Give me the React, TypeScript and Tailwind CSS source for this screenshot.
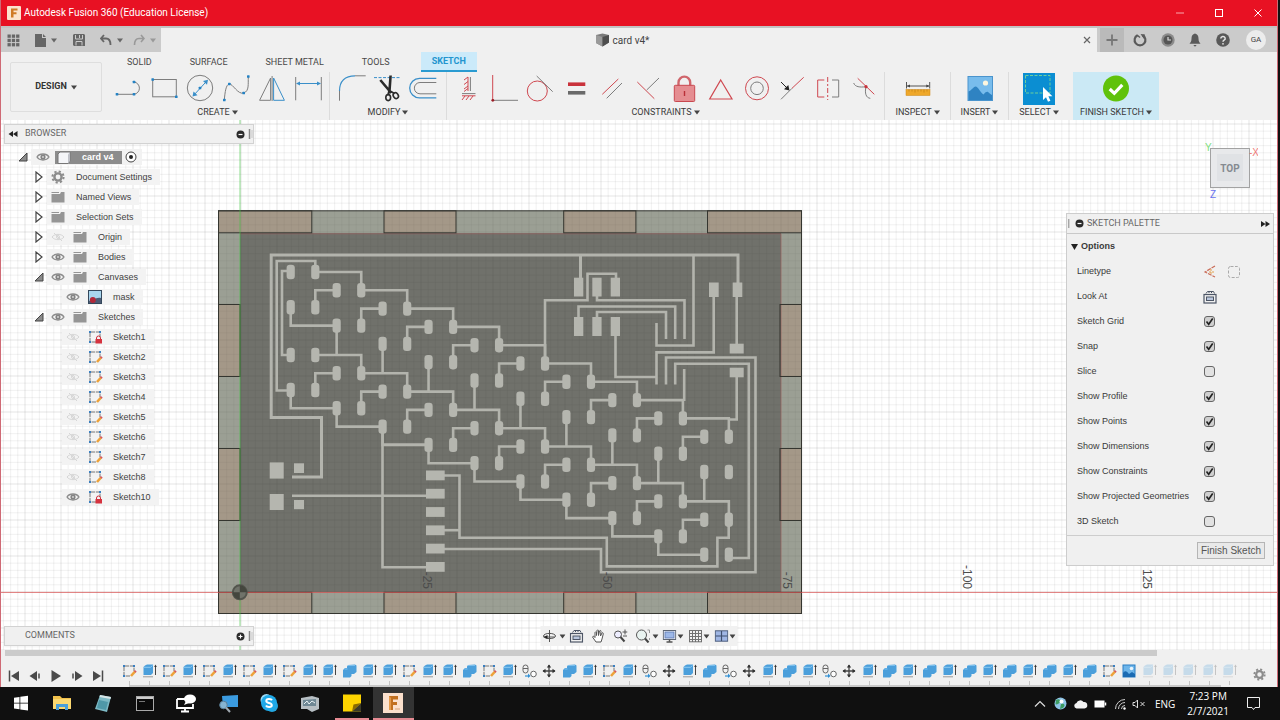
import React, { useState } from "react";

const BLUE = "#3a8fc9";
const RED = "#cf4850";
const GRAY = "#7d7d7d";

type IconProps = { w?: number; h?: number; box?: string; className?: string; children: React.ReactNode };

function Icon({ w = 30, h = 30, box, className = "", children }: IconProps) {
  return (
    <svg width={w} height={h} viewBox={box ?? `0 0 ${w} ${h}`} fill="none" className={`shrink-0 ${className}`} aria-hidden="true">
      {children}
    </svg>
  );
}

function Caret({ className = "text-[#444]" }: { className?: string }) {
  return (
    <Icon w={6} h={5} className={className}>
      <path d="M0 0.5H6L3 4.5Z" fill="currentColor" />
    </Icon>
  );
}

function Dots({ at }: { at: number[][] }) {
  return (
    <>
      {at.map(([x, y]) => (
        <rect key={`${x}-${y}`} x={x - 1.3} y={y - 1.3} width="2.6" height="2.6" rx="0.6" fill="#2482c4" />
      ))}
    </>
  );
}

/* ---------- Ribbon icons ---------- */

const createIcons: [string, React.ReactNode][] = [
  ["Line", <><path d="M4 20.3H21" stroke={GRAY} /><path d="M21 20.3A6.2 6.2 0 0 0 21 8" stroke={GRAY} /><Dots at={[[4, 20.3], [21, 20.3], [21, 8]]} /></>],
  ["Rectangle", <><rect x="3.7" y="5.5" width="23.6" height="17.3" stroke={GRAY} /><Dots at={[[3.7, 5.5], [27.3, 22.8]]} /></>],
  ["Circle", <><circle cx="15" cy="14" r="12.7" stroke={GRAY} /><path d="M8.5 21.5L22 6.8" stroke={BLUE} /><path d="M7.5 22.5l1-5 4 3.8zM23 5.8l-1 5-4-3.8z" fill={BLUE} /><Dots at={[[15, 14]]} /></>],
  ["Spline", <><path d="M3.3 26C4 18 5 10.5 8.3 10S17 21 22.7 19S27 10 27.3 3" stroke={GRAY} /><Dots at={[[3.3, 26], [8.3, 10], [22.7, 19], [27.3, 2.5]]} /></>],
  ["Mirror", <><path d="M13.6 4V26.3H2.6Z" stroke={GRAY} /><path d="M16.6 4V26.3H27.4Z" stroke={BLUE} /><path d="M15.1 2V27" stroke={GRAY} /></>],
  ["Dimension", <><path d="M2.7 3V26.3M28.3 3V26.3" stroke={GRAY} /><path d="M4 9.5H27" stroke={BLUE} /><path d="M3 9.5l4-2v4zM28 9.5l-4-2v4z" fill={BLUE} /></>],
];

const modifyIcons: [string, React.ReactNode][] = [
  ["Fillet", <><path d="M2.5 17C2.5 7 8 1.8 18 1.8" stroke={BLUE} strokeWidth="1.2" /><path d="M2.5 17V26.7M18 1.8H28.7" stroke={GRAY} /></>],
  ["Trim", <><path d="M1 3.6H28" stroke={BLUE} strokeDasharray="3 1.5" /><path d="M7.3 6l11 13M17.6 1.5l-1.3 18" stroke="#2b2b2b" strokeWidth="2.6" /><path d="M16 17l-1 4M17 17l4.5 2.5" stroke="#2b2b2b" strokeWidth="1.8" /><ellipse cx="15.2" cy="23.6" rx="2.4" ry="3" stroke="#2b2b2b" strokeWidth="1.6" /><ellipse cx="22.8" cy="21.6" rx="2.4" ry="3" transform="rotate(-35 22.8 21.6)" stroke="#2b2b2b" strokeWidth="1.6" /></>],
  ["Offset", <><path d="M27.3 4.3H10.5a9.8 9.8 0 0 0 0 19.6H27.3" stroke={BLUE} strokeWidth="1.3" /><path d="M27.3 8.5H11a5.6 5.6 0 0 0 0 11.3H27.3" stroke={GRAY} /></>],
];

const constraintIcons: [string, React.ReactNode][] = [
  ["Horizontal/Vertical", <><path d="M15 3V17M9 21.8H22.5M11 6l4-3M11 10.5l4-3M11 15l4-3M11 17.5l4-3M9 26l3-4M13 26l3-4M17 26l3-4" stroke={RED} /><path d="M17.4 3V17M9 19.6H22.5" stroke={GRAY} /></>],
  ["Coincident", <><path d="M3.7 1V26.3" stroke={RED} /><path d="M3.7 26.3H29" stroke={GRAY} /><circle cx="3.8" cy="26.3" r="1.4" fill="#9b1c25" /></>],
  ["Tangent", <><circle cx="12.3" cy="17" r="10" stroke={RED} /><path d="M11.7 2L27.7 17.7" stroke={GRAY} /></>],
  ["Equal", <><path d="M7 10.2H24.3" stroke="#c9323b" strokeWidth="3.6" /><path d="M7 18.8H24.3" stroke="#6a6a6a" strokeWidth="3.6" /></>],
  ["Parallel", <><path d="M5.3 20.3L21.3 5" stroke={RED} /><path d="M9.7 24.3L25 9" stroke={GRAY} /></>],
  ["Perpendicular", <><path d="M4.3 8L21.3 24.7" stroke={RED} /><path d="M13.7 16L26 4" stroke={GRAY} /></>],
  ["Fix", <><path d="M9.5 12V8.5a5.8 5.8 0 0 1 11.7 0V12" stroke="#d0666c" strokeWidth="2.4" /><rect x="5.3" y="11.3" width="20.4" height="16.2" rx="1" fill="#e58d91" stroke="#c8484f" /><path d="M15.5 17v5" stroke="#b92f38" strokeWidth="1.4" /></>],
  ["Midpoint", <path d="M15.7 6L27 25H4.7Z" stroke={RED} strokeWidth="1.2" />],
  ["Concentric", <><circle cx="16" cy="14.3" r="11.5" stroke={RED} /><circle cx="16" cy="14.3" r="6.3" stroke={GRAY} /></>],
  ["Collinear", <><path d="M4 25.3L15 14.3" stroke={GRAY} /><path d="M15 14.3L26.7 3.3" stroke={RED} /><path d="M4 8L10 14" stroke="#222" /><path d="M12.5 16.5l-1.2-5.5-4.3 4.3z" fill="#222" /></>],
  ["Symmetry", <><path d="M11.3 6H4.7V23H11.3" stroke={RED} /><path d="M14.7 3V26" stroke={RED} strokeDasharray="5 2 2 2" /><path d="M19 6H25.7V23H19" stroke={GRAY} /></>],
  ["Curvature", <><path d="M4.7 9C6 13 11 13.5 17 12.7M17 12.7C15.5 19 17 24 21.3 24.3" stroke={GRAY} /><path d="M8.7 4.3L25.3 20.3" stroke={RED} /><circle cx="17" cy="12.7" r="1.6" fill="#c9323b" /></>],
];

function Group({ label, icons, className }: { label: string; icons: [string, React.ReactNode][]; className: string }) {
  return (
    <div className={`flex shrink-0 flex-col items-center border-r border-[#dcdcdc] ${className}`}>
      <div className="flex h-[33px] items-center">
        {icons.map(([name, art]) => (
          <button key={name} type="button" aria-label={name} className="flex w-9 justify-center">
            <Icon>{art}</Icon>
          </button>
        ))}
      </div>
      <GroupLabel label={label} />
    </div>
  );
}

function GroupLabel({ label }: { label: string }) {
  return (
    <button type="button" className="flex h-[15px] items-center gap-[2px] text-[9px] leading-[15px] whitespace-nowrap text-[#3a3a3a]">
      {label}
      <Caret />
    </button>
  );
}

function Ribbon() {
  return (
    <div className="flex h-[68px] shrink-0 bg-[#f0f0f0] font-['Roboto',sans-serif]">
      <button
        type="button"
        className="mt-[10px] ml-[9px] flex h-[50px] w-[92px] shrink-0 items-center justify-center gap-1 rounded-xs border border-[#dedede] text-[9px] font-bold text-[#333]"
      >
        DESIGN
        <Caret />
      </button>
      <div className="ml-1 flex flex-1 flex-col">
        <nav className="flex h-5 items-stretch pl-[2px] text-[9px] leading-5 text-[#484848]">
          {["SOLID", "SURFACE", "SHEET METAL", "TOOLS"].map((t) => (
            <a key={t} href="#" className="px-[19px]">
              {t}
            </a>
          ))}
          <a href="#" className="ml-3 border-b-2 border-[#2a9bd1] bg-[#cbeafa] px-[11px] leading-[19px] font-bold text-[#2395cf]">
            SKETCH
          </a>
        </nav>
        <div className="flex h-12 items-stretch">
          <Group label="CREATE" icons={createIcons} className="w-[224px]" />
          <Group label="MODIFY" icons={modifyIcons} className="w-[117px]" />
          <Group label="CONSTRAINTS" icons={constraintIcons} className="w-[438px]" />
          <div className="flex w-[66px] shrink-0 flex-col items-center border-r border-[#dcdcdc]">
            <div className="flex h-[33px] items-center">
              <Icon>
                <rect x="3" y="15.5" width="24" height="6" fill="#efa82a" stroke="#c98514" strokeWidth="0.5" />
                <path d="M6 15.5v2M9 15.5v2M12 15.5v3M15 15.5v2M18 15.5v2M21 15.5v3M24 15.5v2" stroke="#b5760e" strokeWidth="0.6" />
                <path d="M3.5 8V14.5M26.7 8V14.5M4 12H26" stroke="#555" />
                <path d="M4 12l3-1.6v3.2zM26.3 12l-3-1.6v3.2z" fill="#444" />
              </Icon>
            </div>
            <GroupLabel label="INSPECT" />
          </div>
          <div className="flex w-[58px] shrink-0 flex-col items-center border-r border-[#dcdcdc]">
            <div className="flex h-[33px] items-center">
              <Icon>
                <rect x="3" y="2.5" width="24.5" height="24" fill="#78bcec" stroke="#4a94cd" />
                <circle cx="20.5" cy="9" r="2.6" fill="#fdf6df" />
                <path d="M3.5 17.5C7 16 9 12 11 12.5S16 19 18.5 20.5C20.5 18 22 17.5 23 18S26 21 27 21V26H3.5Z" fill="#2f83c2" />
              </Icon>
            </div>
            <GroupLabel label="INSERT" />
          </div>
          <div className="mr-1 flex w-[60px] shrink-0 flex-col items-center">
            <div className="flex h-[33px] items-center">
              <Icon w={32} h={32}>
                <rect width="32" height="32" fill="#0b8ed2" />
                <path d="M2.5 2.5H27V20H2.5Z" stroke="#6ccf9b" strokeDasharray="3 1.5" />
                <path d="M20 14V27l3-2.8 2 4.6 2.4-1-2-4.5h4z" fill="#fff" />
              </Icon>
            </div>
            <GroupLabel label="SELECT" />
          </div>
          <div className="flex w-[86px] shrink-0 flex-col items-center bg-[#cbe9f5]">
            <div className="flex h-[33px] items-center">
              <Icon>
                <circle cx="15" cy="14.5" r="13" fill="#60c20b" />
                <path d="M8.7 15l4.6 4.3 8-8.5" stroke="#fff" strokeWidth="3.2" />
              </Icon>
            </div>
            <GroupLabel label="FINISH SKETCH" />
          </div>
        </div>
      </div>
    </div>
  );
}

/* ---------- Title and tab bars ---------- */

function TitleBar() {
  return (
    <header className="flex h-[26px] shrink-0 items-center bg-[#e81123] pl-[6px] text-white">
      <Icon w={14} h={14}>
        <rect width="14" height="14" rx="1" fill="#fbe3cd" />
        <path d="M4 2.5H10.5V4.5H6.5V6.3H9.5V8.2H6.5V11.5H4Z" fill="#cf7a26" />
      </Icon>
      <h1 className="ml-[3px] flex-1 font-['Roboto',sans-serif] text-[10px] leading-4">Autodesk Fusion 360 (Education License)</h1>
      <button type="button" aria-label="Minimize" className="flex w-[39px] justify-center">
        <Icon w={10} h={10}><path d="M1 5H9" stroke="#f9a9af" /></Icon>
      </button>
      <button type="button" aria-label="Maximize" className="flex w-[39px] justify-center">
        <Icon w={10} h={10}><rect x="1.5" y="1.5" width="7" height="7" stroke="#fff" /></Icon>
      </button>
      <button type="button" aria-label="Close" className="flex w-[39px] justify-center">
        <Icon w={10} h={10}><path d="M1.5 1.5L8.5 8.5M8.5 1.5L1.5 8.5" stroke="#fff" /></Icon>
      </button>
    </header>
  );
}

function TabBar() {
  return (
    <div className="flex h-[26px] shrink-0 border-t-2 border-[#c3c3c3] bg-[#f0f0f0] text-[#666]">
      <div className="flex w-[160px] items-center bg-[#cbcbcb]">
        <button type="button" aria-label="Data panel" className="ml-[6px]">
          <Icon w={13} h={13}>
            {[0, 1, 2].map((r) => [0, 1, 2].map((c) => <rect key={`${r}${c}`} x={0.5 + c * 4.3} y={0.5 + r * 4.3} width="3.3" height="3.3" fill="#666" />))}
          </Icon>
        </button>
        <button type="button" aria-label="File" className="ml-[15px] flex items-center gap-[5px]">
          <Icon w={11} h={13}><path d="M0 0H7V4H11V13H0ZM8 0L11 3H8Z" fill="#666" /></Icon>
          <Caret className="text-[#666]" />
        </button>
        <button type="button" aria-label="Save" className="ml-[16px]">
          <Icon w={12} h={12}>
            <path d="M1 0H11L12 1V12H1L0 11V1Z" fill="#666" />
            <path d="M2.5 1V5H9.5V1M3 11.5V7.5H9V11.5" stroke="#cbcbcb" />
            <path d="M6.5 1v3" stroke="#cbcbcb" />
          </Icon>
        </button>
        <button type="button" aria-label="Undo" className="ml-[15px] flex items-center gap-[5px]">
          <Icon w={12} h={12}><path d="M4 1L1 4.5L4 8M1.5 4.5H6C9 4.5 10.5 7 10.5 11" stroke="#666" strokeWidth="1.8" /></Icon>
          <Caret className="text-[#666]" />
        </button>
        <button type="button" aria-label="Redo" className="ml-[10px] flex items-center gap-[5px]">
          <Icon w={12} h={12}><path d="M8 1L11 4.5L8 8M10.5 4.5H6C3 4.5 1.5 7 1.5 11" stroke="#999" strokeWidth="1.6" /></Icon>
          <Caret className="text-[#999]" />
        </button>
      </div>
      <div className="flex flex-1 items-center">
        <div className="flex flex-1 items-center justify-center gap-[3px] text-[10px] text-[#444] font-['Roboto',sans-serif]">
          <Icon w={15} h={14}>
            <path d="M7.5 0.5L14 2V9.5L7.5 13.5L1 10V2Z" fill="#7b7b7b" />
            <path d="M7.5 4V13.5L1 10V2Z" fill="#9a9a9a" />
            <path d="M7.5 4L14 2V9.5L7.5 13.5Z" fill="#4e4e4e" />
          </Icon>
          card v4*
        </div>
        <button type="button" aria-label="Close tab" className="mr-[6px]">
          <Icon w={8} h={8}><path d="M1 1L7 7M7 1L1 7" stroke="#666" strokeWidth="1.2" /></Icon>
        </button>
      </div>
      <div className="flex w-[180px] items-center bg-[#cbcbcb]">
        <button type="button" aria-label="New tab" className="ml-[3px] flex h-6 w-6 items-center justify-center bg-[#bababa]">
          <Icon w={12} h={12}><path d="M6 0.5V11.5M0.5 6H11.5" stroke="#777" strokeWidth="1.8" /></Icon>
        </button>
        <button type="button" aria-label="Extensions" className="ml-[9px]">
          <Icon w={14} h={14}><path d="M9.5 2.2A5.4 5.4 0 1 1 4.500 2.2" stroke="#5a5a5a" strokeWidth="2.200" /><path d="M7.500 1L12 1.500L11 6Z" fill="#5a5a5a" /><path d="M4 2L7 4.500" stroke="#5a5a5a" strokeWidth="1.500" /></Icon>
        </button>
        <button type="button" aria-label="Job status" className="ml-[14px]">
          <Icon w={14} h={14}><circle cx="7" cy="7" r="6.7" fill="#8b8b8b" /><circle cx="7" cy="7" r="4.5" fill="#555" /><path d="M7 4v3h3" stroke="#ddd" strokeWidth="1.2" /></Icon>
        </button>
        <button type="button" aria-label="Notifications" className="ml-[13px]">
          <Icon w={14} h={14}><path d="M7 0.5C9.5 1 10.5 3 10.5 5.5C10.5 8.5 11.5 9.5 12.5 10.8H1.5C2.5 9.5 3.5 8.5 3.5 5.5C3.5 3 4.5 1 7 0.5Z" fill="#595959" /><path d="M5.3 12H8.7L7 13.8Z" fill="#595959" /></Icon>
        </button>
        <button type="button" aria-label="Help" className="ml-[14px]">
          <Icon w={14} h={14}><circle cx="7" cy="7" r="6.8" fill="#595959" /><path d="M4.8 5.5a2.2 2 0 1 1 3.3 1.7C7.3 7.7 7 8 7 8.8" stroke="#e4e4e4" strokeWidth="1.5" /><circle cx="7" cy="10.8" r="0.9" fill="#e4e4e4" /></Icon>
        </button>
        <button type="button" className="ml-[16px] h-5 w-5 rounded-full bg-[#ececec] text-[8px] leading-5 text-[#444] font-['Roboto',sans-serif]">
          GA
        </button>
      </div>
    </div>
  );
}

/* ---------- Canvas drawing ---------- */

const STEP_X = 45.95;
const STEP_Y = 18.3;
const ax = (i: number) => 290.7 + STEP_X * i;
const bx = (i: number) => 315.3 + STEP_X * i;
const rowY = (r: number, i: number) => [272, 307.3, 355, 390][r] + STEP_Y * i;
const cols = Array.from({ length: 10 }, (_, i) => i);

const gridTraces = cols.flatMap((i) => {
  const out: string[] = [];
  if (i < 9) {
    out.push(`M${ax(i)} ${rowY(3, i)}V${rowY(3, i + 1)}H${ax(i + 1)}`);
    out.push(`M${bx(i)} ${rowY(2, i)}H${bx(i + 1)}V${rowY(2, i + 1)}`);
    out.push(`M${bx(i)} ${rowY(0, i)}H${bx(i + 1)}V${rowY(0, i + 1)}`);
  }
  if (i > 0) {
    out.push(`M${ax(i)} ${rowY(0, i)}H${bx(i - 1)}V${rowY(1, i - 1)}`);
    out.push(`M${ax(i)} ${rowY(2, i)}H${bx(i - 1)}V${rowY(3, i - 1)}`);
    out.push(`M${ax(i)} ${rowY(1, i)}V${rowY(2, i - 1)}`);
  }
  return out;
});

const traces = [
  "M290.7 307V325.6H336.7",
  "M315.3 272V261H276.7V390.5H290.7",
  "M290.7 271H282V355H290.7",
  "M545 364V300.3H587.5V273.7H616V280",
  "M597 294V300.3H684.5V339",
  "M578.5 320V306.5H675.2V339",
  "M597 320V312H666V339",
  "M615.5 334V377H656.5",
  "M656.5 384.5V352.4H713.7V295",
  "M656.5 323V345.5H693.5V255",
  "M666 384.5V357.5H755.5V572.3H601V549H443",
  "M675.2 384.5V363.7H748.8V558H729",
  "M684.2 369V401",
  "M736.7 295V345M736.7 375V419.5H729",
  "M728.7 520V537.7H717.4V566.4H606.8V537.7H459.5V475.5H443",
  "M443 530.2H459.5",
  "M382.5 426V567.2H428M382.5 444.8H428",
  "M292 495.7H428",
];

const wideTraces = ["M292 477H321.5V417.5H271.2V255H738V285", "M580.5 255V280"];

const rectPads: number[][] = [
  ...[574, 592.3, 610.7].flatMap((x) => [[x, 277.7, 9.3, 18.8], [x, 317, 9.3, 19]]),
  [709, 282.5, 9.7, 14.5], [732.7, 282.5, 9.6, 14.5],
  [729.7, 343.7, 14, 9.8], [729.7, 367.7, 14, 9.6],
  ...[0, 1, 2, 3, 4, 5].map((i) => [426, 470.5 + 18.3 * i, 18.7, 9.8]),
  [269.7, 462.4, 14, 16.2], [269.7, 494, 14, 16],
  [294, 463.3, 10, 9.7], [294, 500, 10, 9.2],
];

const tan: number[][] = [
  [218.5, 210.8, 93.3, 22], [384, 210.8, 72, 22], [563.7, 210.8, 72.2, 22], [707.5, 210.8, 94, 22],
  [218.5, 592.3, 93.3, 21.2], [384, 592.3, 72, 21.2], [563.7, 592.3, 72.2, 21.2], [707.5, 592.3, 94, 21.2],
  [218.5, 304.5, 21.5, 72], [218.5, 448.5, 21.5, 72], [780, 304.5, 21.5, 72], [780, 448.5, 21.5, 72],
];

const axisLabels: [string, number][] = [["-25", 427], ["-50", 607], ["-75", 787], ["-100", 967], ["125", 1147]];

function Board() {
  return (
    <svg className="absolute inset-0 h-full w-full" role="img" aria-label="Sketch canvas">
      <defs>
        <pattern id="grid" width="36" height="36" patternUnits="userSpaceOnUse" patternTransform="translate(24 4)">
          <path d="M7.2 0V36M14.4 0V36M21.6 0V36M28.8 0V36M0 7.2H36M0 14.4H36M0 21.6H36M0 28.8H36" stroke="#000" strokeOpacity="0.05" />
          <path d="M0 0V36M0 0H36M36 0V36M0 36H36" stroke="#000" strokeOpacity="0.1" />
        </pattern>
      </defs>
      <rect width="100%" height="100%" fill="#fff" />
      <rect width="100%" height="100%" fill="url(#grid)" />
      <g transform="translate(-1 -120)">
        <rect x="218.5" y="210.8" width="583" height="402.7" fill="#9b9f94" />
        {tan.map(([x, y, w, h]) => <rect key={`${x}-${y}`} x={x} y={y} width={w} height={h} fill="#a49888" />)}
        <rect x="240" y="233" width="541" height="359" fill="#70716b" />
      </g>
      <svg x="217" y="90" width="584" height="404" viewBox="217 90 584 404" opacity="0.6">
        <rect x="217" y="90" width="584" height="404" fill="url(#grid)" />
      </svg>
      <g transform="translate(-1 -120)">
        <path d="M240 233.8H781V592" stroke="#a3625f" strokeOpacity="0.6" fill="none" />
        <g stroke="#34352f" fill="none">
          <rect x="218.5" y="210.8" width="583" height="402.7" />
          {tan.map(([x, y, w, h]) => <rect key={`${x}-${y}`} x={x} y={y} width={w} height={h} />)}
        </g>
        <g stroke="#b3b4ad" strokeWidth="2.6" fill="none">
          {[...gridTraces, ...traces].map((d, i) => <path key={i} d={d} />)}
        </g>
        <g stroke="#b3b4ad" strokeWidth="3" fill="none">
          {wideTraces.map((d, i) => <path key={i} d={d} />)}
        </g>
        <g fill="#b5b6af">
          {[0, 1, 2, 3].flatMap((r) =>
            cols.flatMap((i) => [
              <rect key={`a${r}${i}`} x={ax(i) - 4.1} y={rowY(r, i) - 7.2} width="8.2" height="14.4" rx="3.3" />,
              <rect key={`b${r}${i}`} x={bx(i) - 4.1} y={rowY(r, i) - 7.2} width="8.2" height="14.4" rx="3.3" />,
            ])
          )}
          {rectPads.map(([x, y, w, h]) => <rect key={`${x}-${y}`} x={x} y={y} width={w} height={h} />)}
        </g>
        <path d="M240 120V800" stroke="#3fc43f" strokeOpacity="0.6" />
        <path d="M0 592.4H4000" stroke="#d94f4f" strokeOpacity="0.75" />
        <circle cx="239.8" cy="592.3" r="7" fill="#70736a" stroke="#53554d" strokeWidth="2" />
        <path d="M239.8 592.3V585.3A7 7 0 0 1 246.8 592.3ZM239.8 592.3V599.3A7 7 0 0 1 232.8 592.3Z" fill="#44463e" />
        <g className="font-['Liberation_Sans',sans-serif] text-[12px]" fill="#4c4c4c" textAnchor="end">
          {axisLabels.map(([t, x]) => (
            <text key={t} transform={`translate(${x - 4} 589) rotate(90)`}>{t}</text>
          ))}
        </g>
      </g>
    </svg>
  );
}

/* ---------- Browser tree ---------- */

function Eye({ off = false }: { off?: boolean }) {
  return (
    <Icon w={14} h={10}>
      {off ? (
        <g stroke="#d6d6d6"><path d="M1 5C3.5 1.5 10.5 1.5 13 5C10.5 8.5 3.5 8.5 1 5ZM3 1L11 9" /><circle cx="7" cy="5" r="1.5" /></g>
      ) : (
        <><path d="M1 5C3.5 1 10.5 1 13 5C10.5 9 3.5 9 1 5Z" fill="#f4f4f4" stroke="#8c8c8c" strokeWidth="1.3" /><circle cx="7" cy="5" r="2.6" fill="#838383" /><circle cx="7" cy="5" r="0.9" fill="#ddd" /></>
      )}
    </Icon>
  );
}

function Folder() {
  return <Icon w={14} h={12}><path d="M0.5 3H9L10 1H13.5V11.5H0.5Z" fill="#959595" /><path d="M0.5 1H8V2H0.5Z" fill="#959595" /></Icon>;
}

function SketchIcon({ locked = false }: { locked?: boolean }) {
  return (
    <Icon w={15} h={14}>
      <path d="M2 2H12V7M2 2V12H8" stroke="#777" strokeDasharray="5 0.8" />
      <path d="M1 1h2v2H1zM11 1h2v2h-2zM1 11h2v2H1z" fill="#3a7fc0" />
      {locked ? (
        <><path d="M8.5 9V8a2 2 0 0 1 4 0V9" stroke="#cf2f3b" /><rect x="7.5" y="9" width="6.5" height="4.5" fill="#d6333f" /></>
      ) : (
        <><path d="M9 12L13 7.5" stroke="#eda239" strokeWidth="2.6" /><path d="M12.4 6.6l1.8 1.5" stroke="#d5555d" strokeWidth="1.4" /></>
      )}
    </Icon>
  );
}

function GearIcon({ size = 14 }: { size?: number }) {
  return (
    <Icon w={size} h={size} box="0 0 14 14">
      <circle cx="7" cy="7" r="5.6" stroke="#8c8c8c" strokeWidth="2" strokeDasharray="2.2 2.2" />
      <circle cx="7" cy="7" r="3.6" stroke="#8c8c8c" strokeWidth="2.4" />
    </Icon>
  );
}

function MaskIcon() {
  return <Icon w={14} h={14}><rect x="0.5" y="0.5" width="13" height="13" fill="#a9d6ee" stroke="#34485c" /><path d="M1 11C5 10 8 7 13 8V13H1Z" fill="#4d5b74" /><circle cx="4.8" cy="10" r="3" fill="#b3293a" /></Icon>;
}

type Node = { label: string; deep?: boolean; arrow?: "open" | "closed"; eye?: "on" | "off"; icon: React.ReactNode };

const nodes: Node[] = [
  { label: "Document Settings", arrow: "closed", icon: <GearIcon /> },
  { label: "Named Views", arrow: "closed", icon: <Folder /> },
  { label: "Selection Sets", arrow: "closed", icon: <Folder /> },
  { label: "Origin", arrow: "closed", eye: "off", icon: <Folder /> },
  { label: "Bodies", arrow: "closed", eye: "on", icon: <Folder /> },
  { label: "Canvases", arrow: "open", eye: "on", icon: <Folder /> },
  { label: "mask", deep: true, eye: "on", icon: <MaskIcon /> },
  { label: "Sketches", arrow: "open", eye: "on", icon: <Folder /> },
  ...[1, 2, 3, 4, 5, 6, 7, 8, 10].map((n): Node => ({
    label: `Sketch${n}`,
    deep: true,
    eye: n === 10 ? "on" : "off",
    icon: <SketchIcon locked={n === 1 || n === 10} />,
  })),
];

function Arrow({ kind }: { kind?: "open" | "closed" }) {
  return (
    <span className="flex w-4 shrink-0 justify-center">
      {kind === "closed" && <Icon w={8} h={12}><path d="M1 1V11L7 6Z" fill="#fff" stroke="#444" strokeWidth="1.2" /></Icon>}
      {kind === "open" && <Icon w={10} h={10}><path d="M9 1V9H1Z" fill="#8b8b8b" stroke="#444" /></Icon>}
    </span>
  );
}

function PanelHeader({ title, plus = false }: { title: string; plus?: boolean }) {
  return (
    <div className="flex h-5 items-center border border-[#d2d2d2] bg-[#f0f0f0] pl-[3px] text-[9px] text-[#666] shadow-xs font-['Roboto',sans-serif]">
      <span className="w-[17px]">
        {!plus && <Icon w={10} h={6}><path d="M5 0V6L0.5 3ZM9.5 0V6L5 3Z" fill="#222" /></Icon>}
      </span>
      <h2 className="flex-1">{title}</h2>
      <button type="button" aria-label={plus ? "Expand" : "Collapse"}>
        <Icon w={9} h={9}>
          <circle cx="4.5" cy="4.5" r="4" fill="#2b2b2b" />
          <path d={plus ? "M2.5 4.5H6.5M4.5 2.5V6.5" : "M2.5 4.5H6.5"} stroke="#fff" strokeWidth="1.2" />
        </Icon>
      </button>
      <Icon w={5} h={10} className="ml-[3px]"><path d="M1.5 0V10" stroke="#888" strokeWidth="1.5" /><path d="M4 1V9" stroke="#c5c5c5" /></Icon>
    </div>
  );
}

function BrowserPanel() {
  return (
    <section className="mt-1">
      <PanelHeader title="BROWSER" />
      <ul className="mt-[3px] text-[9px] leading-4 text-[#3f3f3f] font-['Liberation_Sans',sans-serif]">
        <li className="flex h-5 items-center pl-[11px]">
          <Arrow kind="open" />
          <span className="flex h-4 items-center bg-[#f2f2f2] pr-[5px]">
            <span className="flex w-6 justify-center"><Eye /></span>
            <span className="flex h-[13px] items-center bg-[#8c8c8c] pr-2 pl-[2px] font-bold text-white">
              <Icon w={14} h={13}><path d="M3 1H13V10L11 12.5H1V3Z" fill="#f4f5f8" stroke="#777" /><path d="M11 3.5L13 1V10L11 12.5Z" fill="#bfc1c8" /></Icon>
              <span className="ml-[11px]">card v4</span>
            </span>
            <Icon w={12} h={12} className="ml-[3px]"><circle cx="6" cy="6" r="5" fill="#fff" stroke="#444" /><circle cx="6" cy="6" r="2" fill="#222" /></Icon>
          </span>
        </li>
        {nodes.map((n) => (
          <li key={n.label} className={`flex h-5 items-center ${n.deep ? "pl-[42px]" : "pl-[27px]"}`}>
            <Arrow kind={n.arrow} />
            <span className="flex h-4 items-center bg-[#f3f3f3] pr-2">
              {n.eye && <span className="flex w-[22px] justify-center"><Eye off={n.eye === "off"} /></span>}
              <span className="flex w-[22px] justify-center">{n.icon}</span>
              <span className="pl-[7px]">{n.label}</span>
            </span>
          </li>
        ))}
      </ul>
    </section>
  );
}

/* ---------- Sketch palette ---------- */

const options: [string, boolean][] = [
  ["Sketch Grid", true],
  ["Snap", true],
  ["Slice", false],
  ["Show Profile", true],
  ["Show Points", true],
  ["Show Dimensions", true],
  ["Show Constraints", true],
  ["Show Projected Geometries", true],
  ["3D Sketch", false],
];

function LookAtIcon() {
  return (
    <Icon w={14} h={14}>
      <rect x="1" y="4.5" width="12" height="8.5" stroke="#4d5666" strokeWidth="1.2" />
      <rect x="3.5" y="7" width="7" height="3.5" fill="#b9c6dd" stroke="#4d5666" />
      <path d="M3 3.5L4.5 1.5H10.500L11.500 3.500M6 1.500V3M8.500 1.500V3" stroke="#4d5666" />
    </Icon>
  );
}

function Palette() {
  const [checked, setChecked] = useState<Record<string, boolean>>(Object.fromEntries(options));
  return (
    <section className="border border-[#cdcdcd] bg-[#f0f0f0] text-[9px] text-[#3a3a3a] font-['Liberation_Sans',sans-serif]">
      <div className="flex h-5 items-center border-b border-[#c9c9c9] pr-[3px] pl-px text-[#666] font-['Roboto',sans-serif]">
        <Icon w={3} h={9}><path d="M0.8 0V9" stroke="#888" /></Icon>
        <button type="button" aria-label="Collapse palette" className="ml-1">
          <Icon w={9} h={9}><circle cx="4.5" cy="4.5" r="4" fill="#2b2b2b" /><path d="M2.5 4.5H6.5" stroke="#fff" strokeWidth="1.2" /></Icon>
        </button>
        <h2 className="ml-[3px] flex-1">SKETCH PALETTE</h2>
        <button type="button" aria-label="Dock palette">
          <Icon w={9} h={6}><path d="M0 0V6L4.5 3ZM4.5 0V6L9 3Z" fill="#222" /></Icon>
        </button>
      </div>
      <h3 className="flex h-[25px] items-center gap-[3px] pl-1 text-[9px] font-bold">
        <Icon w={7} h={6}><path d="M0 0H7L3.5 6Z" fill="#222" /></Icon>
        Options
      </h3>
      <div className="flex h-[25px] items-center pl-[10px]">
        <span className="flex-1">Linetype</span>
        <span className="flex w-[70px] gap-[10px]">
          <button type="button" aria-label="Construction">
            <Icon w={14} h={14}><path d="M12 1L2 7L12 12" stroke="#c96b57" strokeWidth="1.2" strokeDasharray="4 1" /><path d="M8 4V10M11 7H5" stroke="#e2a04c" strokeDasharray="2 1" /></Icon>
          </button>
          <button type="button" aria-label="Centerline">
            <Icon w={14} h={14}><rect x="1.5" y="1.5" width="11" height="11" rx="2" stroke="#a9a9a9" strokeDasharray="3 1.5" /></Icon>
          </button>
        </span>
      </div>
      <div className="flex h-[25px] items-center pl-[10px]">
        <span className="flex-1">Look At</span>
        <span className="w-[70px]">
          <button type="button" aria-label="Look At" className="block"><LookAtIcon /></button>
        </span>
      </div>
      {options.map(([label]) => (
        <label key={label} className="flex h-[25px] items-center pl-[10px]">
          <span className="flex-1">{label}</span>
          <span className="grid w-[69px] items-center">
            <input
              type="checkbox"
              checked={checked[label]}
              onChange={() => setChecked({ ...checked, [label]: !checked[label] })}
              className="[grid-area:1/1] m-0 h-[11px] w-[11px] appearance-none rounded-[3px] border border-[#666] bg-[#e2e2e2] checked:bg-[#cfcfcf]"
            />
            {checked[label] && (
              <Icon w={11} h={11} className="pointer-events-none [grid-area:1/1]"><path d="M2.5 5.5L4.7 8.3L8.7 2.5" stroke="#222" strokeWidth="1.6" /></Icon>
            )}
          </span>
        </label>
      ))}
      <div className="mt-px flex h-[30px] items-center justify-end border-t border-[#cdcdcd] pr-[8px]">
        <button type="button" className="h-[17px] border border-[#b5b5b5] bg-[#e9e9e9] px-[3px] text-[10px] leading-[15px] text-[#555]">
          Finish Sketch
        </button>
      </div>
    </section>
  );
}

function ViewCube() {
  return (
    <Icon w={56} h={60}>
      <rect x="8.5" y="8.5" width="39" height="39" fill="#e8e9eb" stroke="#a2a2a2" />
      <rect x="15" y="14" width="26" height="27" fill="#e0e2e5" />
      <g className="font-['Liberation_Sans',sans-serif] text-[10px]">
        <text x="28" y="32" textAnchor="middle" className="font-['Roboto',sans-serif] font-bold" fill="#858a90">TOP</text>
        <text x="3" y="11" fill="#7fe07f">Y</text>
        <text x="47" y="16" fill="#ef7a7a">-X</text>
        <text x="8" y="58" fill="#6a74f0">Z</text>
      </g>
    </Icon>
  );
}

/* ---------- Navigation bar ---------- */

function NavBar() {
  const c = "#555";
  return (
    <div className="absolute bottom-[4px] left-1/2 flex h-5 -translate-x-1/2 items-center bg-[#f1f1f1] px-[2px]">
      <button type="button" aria-label="Orbit" className="flex w-[27px] items-center gap-[3px]">
        <Icon w={14} h={14}><path d="M7 1V13M1 8H12" stroke={c} /><ellipse cx="7" cy="7" rx="6" ry="2.6" stroke={c} /><path d="M5 10l-3.5-2 3.5-2z" fill="#222" /></Icon>
        <Caret />
      </button>
      <button type="button" aria-label="Look At" className="w-[22px]"><LookAtIcon /></button>
      <button type="button" aria-label="Pan" className="w-[22px]">
        <Icon w={14} h={14}><path d="M4.5 13L1 8C1.5 6.5 3 7.5 3.5 8.5V3.5C4 2.5 5 3 5 3.5V6.5L5.5 1.5C6 0.5 7 1 7 1.5V6.5L8 2C8.5 1 9.5 1.5 9.5 2.2L9 7L10.5 4C11.2 3.3 12 4 11.8 4.8L10.5 10L9.5 13Z" fill="#fff" stroke={c} /></Icon>
      </button>
      <button type="button" aria-label="Zoom" className="w-[22px]">
        <Icon w={14} h={14}><circle cx="4.5" cy="5.5" r="3.5" fill="#eef" stroke={c} /><path d="M7 8L11 12.5" stroke="#444" strokeWidth="2" /><path d="M9 3H14M11.5 0.5V5.5M9.5 7H13.5" stroke={c} /></Icon>
      </button>
      <button type="button" aria-label="Fit" className="flex w-[27px] items-center gap-[2px]">
        <Icon w={15} h={14}><circle cx="6" cy="6" r="5" fill="#e9f3f0" stroke={c} /><path d="M9.5 9.5L13 13.5" stroke="#444" strokeWidth="2" /><path d="M12 1H14V4M14 9V11" stroke="#999" /></Icon>
        <Caret />
      </button>
      <button type="button" aria-label="Display settings" className="flex w-[26px] items-center gap-px">
        <Icon w={14} h={14}><rect x="0.8" y="1.5" width="12.4" height="9" fill="#fff" stroke="#5d6675" /><rect x="2.5" y="3" width="9" height="6" fill="#9db8e8" stroke="#6983bb" /><path d="M4 13H10M7 10.5V13" stroke={c} strokeWidth="1.5" /></Icon>
        <Caret />
      </button>
      <button type="button" aria-label="Grid and snaps" className="flex w-[26px] items-center gap-px">
        <Icon w={14} h={14}><path d="M1 1V13M4 1V13M7 1V13M10 1V13M13 1V13M0.5 1.5H13.5M0.5 4.5H13.5M0.5 7.5H13.5M0.5 10.5H13.5M0.5 12.8H13.5" stroke="#707070" /></Icon>
        <Caret />
      </button>
      <button type="button" aria-label="Viewports" className="flex items-center gap-px">
        <Icon w={14} h={14}><rect x="0.8" y="1.8" width="12.4" height="10.4" fill="#9fb6e4" stroke="#4e5f7e" /><path d="M7 2V12M1 7H13" stroke="#3f4f6e" strokeWidth="1.2" /></Icon>
        <Caret />
      </button>
    </div>
  );
}

/* ---------- Timeline ---------- */

const history = "SESESESESEECEESEECSEJMCESEJMECJMECEJMECECECECECECSIeeeee".split("");

const featureNames: Record<string, string> = { S: "Sketch", E: "Extrude", C: "Combine", J: "Copy", M: "Move", I: "Canvas", e: "Suppressed extrude" };

function Feature({ kind }: { kind: string }) {
  switch (kind) {
    case "S":
      return <SketchIcon />;
    case "C":
      return <Icon w={15} h={14}><path d="M6 1L13 0.5L14.5 1.5V8L12 10H9.5V12L8 13.5H1V6L3 4H5V2.5Z" fill="#4b9fdb" /><path d="M6 1.5H13M2.5 5H5.5" stroke="#7fc1ee" /></Icon>;
    case "J":
      return <Icon w={15} h={14}><rect x="1" y="1" width="5" height="8" rx="2.5" stroke="#666" /><path d="M1 4.5H6" stroke="#666" /><circle cx="11.5" cy="10" r="2.8" fill="#fff" stroke="#666" /><path d="M3 12H7" stroke="#2f8fd4" strokeWidth="1.2" /><path d="M6 9.5V14L8.5 12z" fill="#2f8fd4" /></Icon>;
    case "M":
      return <Icon w={14} h={14}><path d="M7 1V13M1 7H13" stroke="#444" strokeWidth="1.3" /><path d="M7 0.5L9.2 3.5H4.8ZM7 13.5L9.2 10.5H4.8ZM0.5 7L3.5 4.8V9.2ZM13.5 7L10.5 4.8V9.2Z" fill="#333" /></Icon>;
    case "I":
      return <Icon w={14} h={14}><rect x="1" y="1" width="12" height="12" fill="#6db5ea" stroke="#2a7fc4" /><path d="M1 9C3 6 5 7 7 10L10 8L13 10V13H1Z" fill="#1b6bb3" /><circle cx="9.5" cy="4.5" r="1.8" fill="#e8f4fc" /></Icon>;
    default:
      return (
        <Icon w={15} h={14} className={kind === "e" ? "opacity-25" : ""}>
          <path d="M3 1.5L5 0.5H11V9L9 11H1.5V3Z" fill="#4b9fdb" /><path d="M2 3.3H8.5L10.5 1.5" stroke="#8ccaf2" /><path d="M1 12.8H11" stroke="#999" /><path d="M13.5 2V11" stroke="#444" /><path d="M13.5 0.500L14.800 3H12.200Z" fill="#333" />
        </Icon>
      );
  }
}

function Timeline() {
  const k = "#4a4a4a";
  return (
    <div className="flex h-[31px] shrink-0 items-center bg-[#f0f0f0]">
      <div className="flex w-[118px] shrink-0 items-center gap-[9px] pt-2 pl-[7px]">
        <button type="button" aria-label="Go to start"><Icon w={12} h={12}><path d="M1.5 0.5V11.5" stroke={k} strokeWidth="1.5" /><path d="M11 1V11L3 6Z" fill={k} /></Icon></button>
        <button type="button" aria-label="Step back"><Icon w={12} h={12}><path d="M8 1V11L0.5 6Z" fill={k} /><path d="M10 3.5V8.5" stroke={k} strokeWidth="1.5" /></Icon></button>
        <button type="button" aria-label="Play"><Icon w={12} h={12}><path d="M1.5 0V12L11 6Z" fill={k} /></Icon></button>
        <button type="button" aria-label="Step forward"><Icon w={12} h={12}><path d="M4 1V11L11.5 6Z" fill={k} /><path d="M2 3.5V8.5" stroke={k} strokeWidth="1.5" /></Icon></button>
        <button type="button" aria-label="Go to end"><Icon w={12} h={12}><path d="M10.5 0.5V11.5" stroke={k} strokeWidth="1.5" /><path d="M1 1V11L9 6Z" fill={k} /></Icon></button>
      </div>
      <div className="flex h-full min-w-0 flex-1 flex-col justify-end">
        <div className="flex">
          {history.map((kind, i) => (
            <button key={i} type="button" aria-label={featureNames[kind]} className="flex w-5 shrink-0 flex-col items-center gap-[3px]">
              <Feature kind={kind} />
              <span className="h-1 w-px bg-[#c4c4c4]" />
            </button>
          ))}
        </div>
        <div className="mr-8 ml-[10px] h-[2px] bg-[#c9c9c9]" />
      </div>
      <button type="button" aria-label="Timeline settings" className="mt-[6px] mr-[11px]"><GearIcon size={13} /></button>
    </div>
  );
}

/* ---------- Desktop taskbar ---------- */

const apps: [string, React.ReactNode][] = [
  ["Start", <path key="a" d="M4 5.7L9.5 4.9V10.7H4ZM10.3 4.8L18 3.7V10.7H10.3ZM4 11.5H9.5V17.2L4 16.4ZM10.3 11.5H18V18.5L10.3 17.4Z" fill="#fff" />],
  ["File Explorer", <><path d="M2 4H9L11 6H20V17H2Z" fill="#f2c14b" /><path d="M2 7H20V17H2Z" fill="#fbd870" /><path d="M5 18V12H17V18H14V15H8V18Z" fill="#4a9fd9" /></>],
  ["Notepad", <><path d="M8 3L19 5L15 20L3 17Z" fill="#7db9c4" /><path d="M8 3L19 5L18.5 7L7.5 5Z" fill="#d8e5e6" /><path d="M7 8L16 10L14 18L5 16Z" fill="#4f98a8" /></>],
  ["Command Prompt", <><rect x="2.5" y="4.5" width="17" height="14" fill="#0a0a0a" stroke="#aaa" /><path d="M3 6H19" stroke="#ccc" strokeWidth="2" /><path d="M5 9.5H11" stroke="#777" /></>],
  ["Remote", <><path d="M2 7H11M2 7V16H18V12M10 16V19M6 19.5H14" stroke="#fff" strokeWidth="1.8" /><ellipse cx="15" cy="7" rx="6" ry="4.5" fill="#fff" /><path d="M11 9L9 13L14 11Z" fill="#fff" /></>],
  ["Magnifier", <><path d="M5 4L21 3V15L6 15Z" fill="#3b9be0" /><circle cx="6.500" cy="13" r="3.800" fill="#86b4d2" stroke="#5a7f98" /><path d="M9 15.500L13 20" stroke="#a0a9b0" strokeWidth="2" /></>],
  ["Skype", <><circle cx="8.5" cy="8" r="6" fill="#9fdcf6" /><circle cx="14" cy="14" r="6" fill="#25a7e0" /><circle cx="11" cy="11" r="8" fill="#1fa9e8" /><path d="M14 8.3C13 6.5 8.3 6.5 8.3 9C8.3 11.5 13.8 10.5 13.8 13.2C13.8 15.5 9 15.5 8 13.5" stroke="#fff" strokeWidth="2" /></>],
  ["Task Manager", <><path d="M2 6L13 4L20 6V17L13 20L8 17H2Z" fill="#b7bfc4" /><path d="M4 8L17 7V14L4 14Z" fill="#6f8895" /><path d="M5 12L8 9L10 12L13 9L16 11" stroke="#e8f2f5" /></>],
  ["Sticky Notes", <><rect x="2" y="2.5" width="18" height="17" fill="#fdd400" /><path d="M11 19.5L20 11V19.5Z" fill="#3a3a2a" /><path d="M11 19.5L12.500 12.500L20 11Z" fill="#8a6c00" /></>],
  ["Fusion 360", <><rect x="1" y="1" width="20" height="20" fill="#fbe0cc" /><path d="M7 4H16V7.5H11V10H15V13H11V18H7Z" fill="#c2701f" /><path d="M7 4L9 6V18H7Z" fill="#e59a4a" /><path d="M13 17H18" stroke="#d8a37c" /></>],
];

function Taskbar() {
  return (
    <footer className="flex h-[33px] shrink-0 items-stretch bg-[#101010] text-white font-['Open_Sans','Noto_Sans',sans-serif]">
      <div className="grid w-[414px] shrink-0 grid-cols-10">
        {apps.map(([name, art], i) => (
          <button
            key={name}
            type="button"
            aria-label={name}
            className={`flex items-center justify-center border-b-2 ${i === 9 ? "bg-[#333]" : "mx-1"} ${i >= 8 ? "border-[#e58a92]" : "border-transparent"}`}
          >
            <Icon w={22} h={22}>{art}</Icon>
          </button>
        ))}
      </div>
      <div className="ml-auto flex items-center text-[10px] leading-4">
        <Icon w={12} h={12}><path d="M1 8.5L6 3.5L11 8.5" stroke="#ddd" strokeWidth="1.2" /></Icon>
        <Icon w={13} h={13} className="ml-2"><circle cx="6.5" cy="6.5" r="6" fill="#8fc4e6" /><path d="M2 3C5 1 7 3 6 5S2 8 1.5 7ZM7 7C10 6 12 8 9 11L6 12Z" fill="#3d9c62" /><circle cx="7.5" cy="4.5" r="2" fill="#fff" /></Icon>
        <Icon w={15} h={12} className="ml-[6px]"><path d="M3.5 10.5A2.8 2.8 0 0 1 3.5 5A4 4 0 0 1 10.5 4A3.2 3.2 0 0 1 11.5 10.5Z" fill="#f2f2f2" /></Icon>
        <Icon w={13} h={12} className="ml-[6px]"><rect x="0.5" y="2.5" width="10" height="7" fill="#fff" /><path d="M11.5 4.5V7.5" stroke="#fff" strokeWidth="1.5" /></Icon>
        <Icon w={12} h={12} className="ml-[7px]"><path d="M1.5 11A9.5 9.5 0 0 1 11 1.5M4.5 11A6.5 6.5 0 0 1 11 4.5M7.5 11A3.5 3.5 0 0 1 11 7.5" stroke="#ccc" /><circle cx="10.5" cy="10.5" r="1.2" fill="#fff" /></Icon>
        <Icon w={14} h={12} className="ml-[6px]"><path d="M1 4.5H3L5.5 2V10L3 7.5H1Z" stroke="#ddd" /><path d="M8.5 4L12.5 8M12.5 4L8.5 8" stroke="#ddd" /></Icon>
        <span className="ml-[9px]">ENG</span>
        <span className="mx-3 flex flex-col items-center leading-[15px]">
          <span>7:23 PM</span>
          <span>2/7/2021</span>
        </span>
        <Icon w={15} h={15} className="mr-[19px] ml-[5px]"><path d="M1.5 1.5H13.5V11.5H9L7.5 13.5L6 11.5H1.5Z" stroke="#eee" /></Icon>
      </div>
    </footer>
  );
}

export default function App() {
  return (
    <div className="flex min-h-screen flex-col bg-[#101010]">
      <div className="mr-[2px] flex flex-1 flex-col border-x border-[#cf6a75]">
        <TitleBar />
        <TabBar />
        <Ribbon />
        <main className="relative flex flex-1 justify-between overflow-hidden">
          <Board />
          <div className="relative ml-[3px] flex w-[250px] flex-col justify-between">
            <BrowserPanel />
            <div className="mb-1">
              <PanelHeader title="COMMENTS" plus />
            </div>
          </div>
          <aside className="relative mr-[3px] w-[208px]">
            <div className="flex h-[93px] justify-end pt-5 pr-4">
              <ViewCube />
            </div>
            <Palette />
          </aside>
          <NavBar />
        </main>
        <div className="h-[6px] shrink-0 bg-[#f0f0f0] pr-[120px] pl-1">
          <div className="h-[6px] bg-[#cbcbcb]" />
        </div>
        <Timeline />
      </div>
      <Taskbar />
    </div>
  );
}
